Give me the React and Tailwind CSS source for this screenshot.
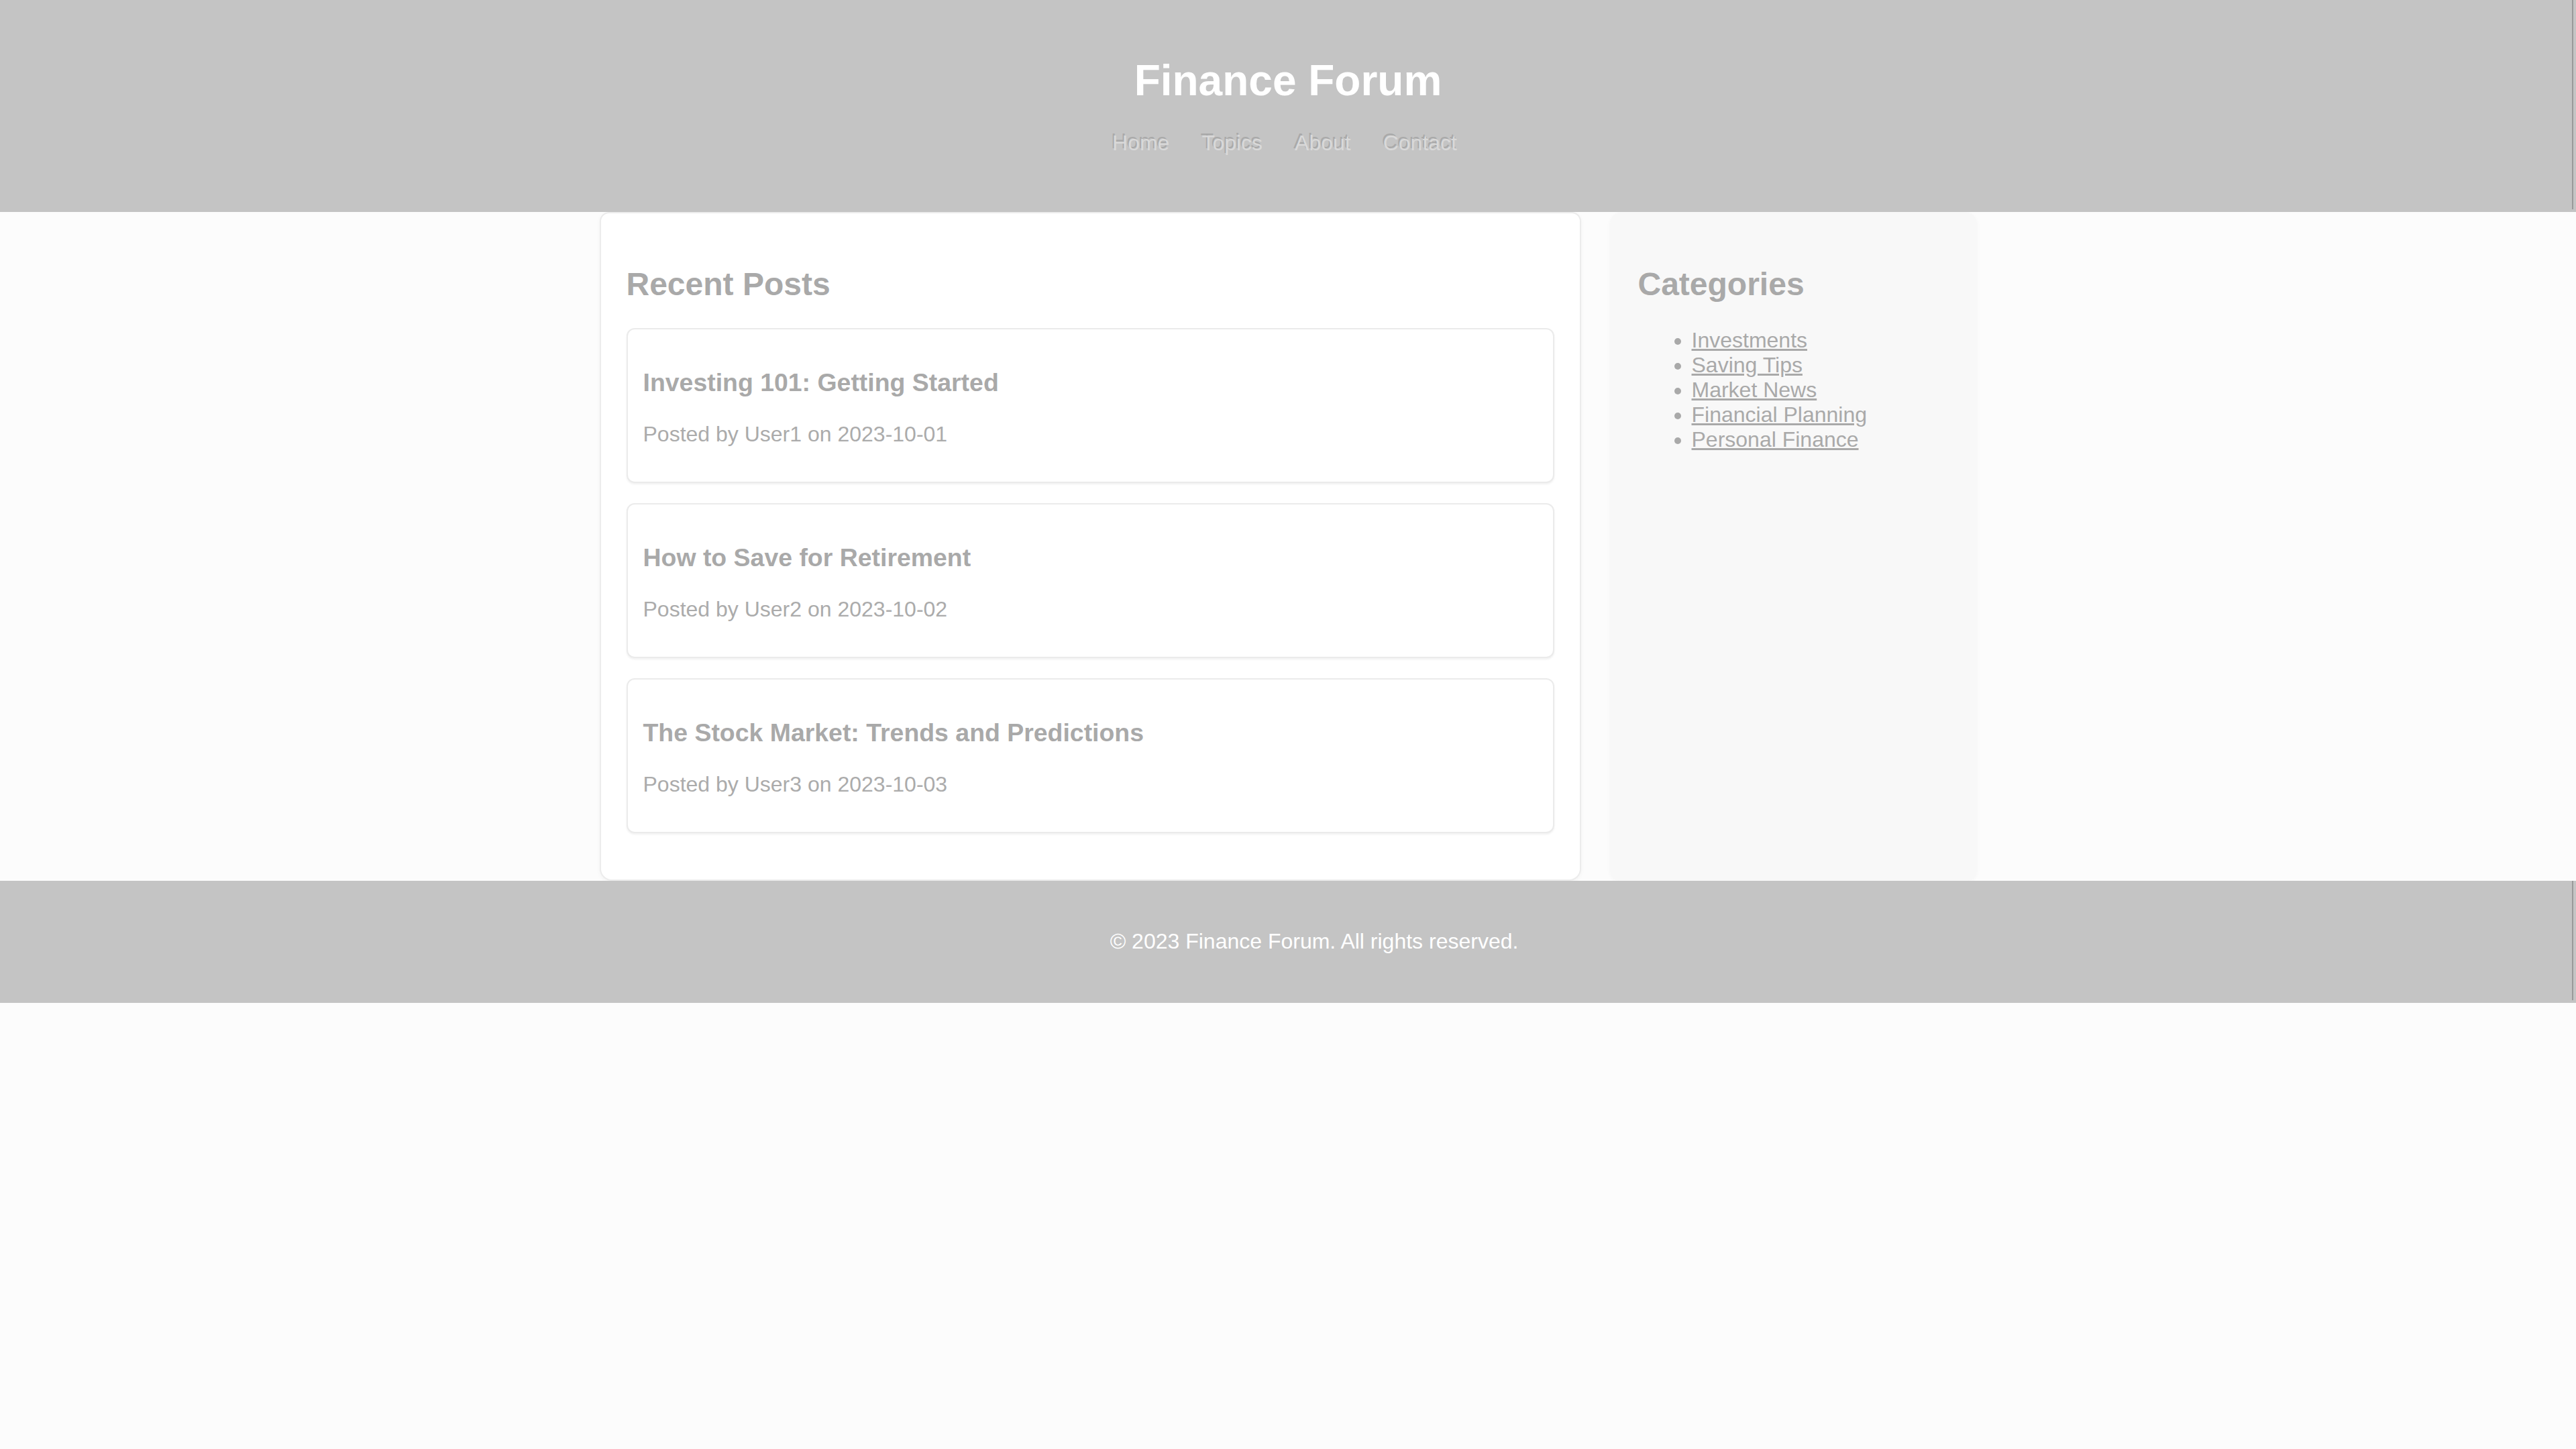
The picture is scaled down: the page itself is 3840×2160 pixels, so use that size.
const posts = [
  { title: 'Investing 101: Getting Started', author: 'User1', date: '2023-10-01' },
  { title: 'How to Save for Retirement', author: 'User2', date: '2023-10-02' },
  { title: 'The Stock Market: Trends and Predictions', author: 'User3', date: '2023-10-03' },
];

const categories = ['Investments', 'Saving Tips', 'Market News', 'Financial Planning', 'Personal Finance'];

const navLinks = ['Home', 'Topics', 'About', 'Contact'];

function PostCard({ post }) {
  return (
    <article className="mb-[30px] rounded-[12px] border-2 border-[#ebebeb] bg-white px-[23px] pt-[58px] pb-[52px] shadow-[0_2px_3px_rgba(0,0,0,0.06)]">
      <h3 className="text-[37.44px] font-bold leading-[43px] text-[#a9a9a9]">{post.title}</h3>
      <p className="mt-[37px] text-[32px] leading-[37px] text-[#ababab]">
        Posted by {post.author} on {post.date}
      </p>
    </article>
  );
}

export default function App() {
  return (
    <div className="min-h-[2160px] bg-[#fcfcfc] font-['Liberation_Sans',Arial,sans-serif]">
      <header className="relative h-[316px] bg-[#c4c4c4] pt-[83px] text-center">
        <h1 className="text-[64px] font-bold leading-[74px] text-white">Finance Forum</h1>
        <nav className="mt-[38px] flex justify-center gap-[48px] pr-[10px] text-[32px] leading-[37px] text-[#d9d9d9]">
          {navLinks.map((link) => (
            <a key={link} href="#" className="[text-shadow:-2px_-3px_0_rgba(120,120,120,0.35)]">
              {link}
            </a>
          ))}
        </nav>
        <span className="absolute right-[4px] top-0 bottom-[4px] w-[2px] bg-[#9a9a9a]" />
      </header>

      <div className="mx-auto flex w-[2053px] gap-[43px]">
        <main className="w-[1463px] rounded-b-[18px] rounded-t-[14px] border-2 border-[#ececec] bg-white px-[38px] pt-[78px] pb-[39px] shadow-[0_2px_6px_rgba(0,0,0,0.04)]">
          <h2 className="mb-[38px] text-[48px] font-bold leading-[55px] text-[#a9a9a9]">Recent Posts</h2>
          {posts.map((post) => (
            <PostCard key={post.title} post={post} />
          ))}
        </main>

        <aside className="w-[547px] rounded-[18px] bg-[#f8f8f8] px-[42px] pt-[80px] shadow-[0_2px_6px_rgba(0,0,0,0.03)]">
          <h2 className="mb-[38px] text-[48px] font-bold leading-[55px] text-[#a9a9a9]">Categories</h2>
          <ul className="list-disc pl-[80px] text-[32px] leading-[37px] text-[#a9a9a9] marker:text-[#a9a9a9]">
            {categories.map((cat) => (
              <li key={cat}>
                <a href="#" className="underline">
                  {cat}
                </a>
              </li>
            ))}
          </ul>
        </aside>
      </div>

      <footer className="relative h-[182px] bg-[#c4c4c4] pl-[78px] pt-[72px] text-center">
        <p className="text-[32px] leading-[37px] text-white">© 2023 Finance Forum. All rights reserved.</p>
        <span className="absolute right-[4px] top-0 bottom-[4px] w-[2px] bg-[#9a9a9a]" />
      </footer>
    </div>
  );
}
